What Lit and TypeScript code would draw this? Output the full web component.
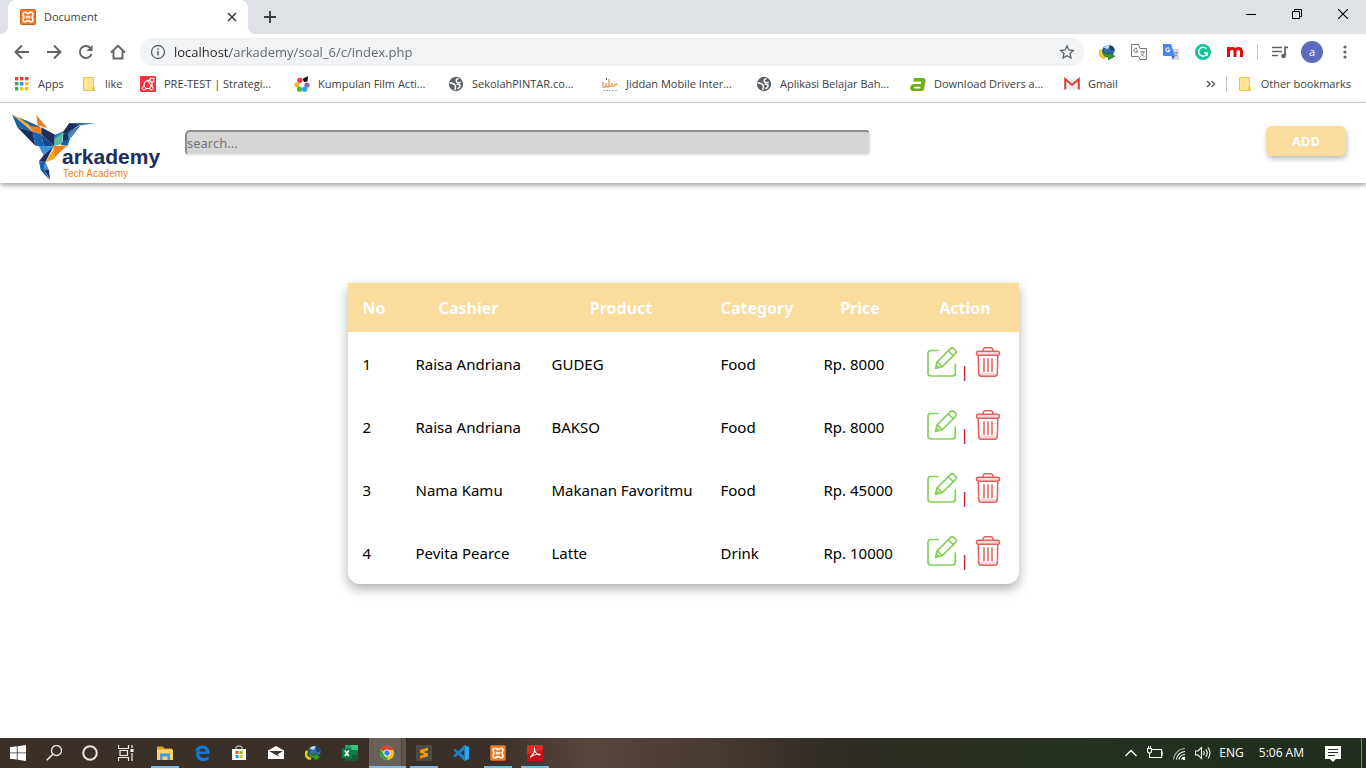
import { LitElement, html, svg, css, TemplateResult } from "lit";
import { customElement, state } from "lit/decorators.js";
import { classMap } from "lit/directives/class-map.js";

const icon = (size: number, body: TemplateResult, box = "0 0 16 16") =>
  html`<svg class="ico" width=${size} height=${size} viewBox=${box} aria-hidden="true">${body}</svg>`;

/* ---------- shared glyphs ---------- */
const xampp = svg`<rect x=".5" y=".5" width="15" height="15" rx="1" fill="#f47b20" stroke="#c9601a"/>
  <path d="M5.600 3.200C3.800 3 2.800 4.200 3.100 5.600c.2 1 .8 1.400.8 2.400s-.6 1.400-.8 2.400c-.3 1.400.7 2.600 2.500 2.400 1.200-.2 1.200-1.300 2.400-1.300s1.200 1.100 2.400 1.300c1.800.2 2.800-1 2.500-2.400-.2-1-.8-1.400-.8-2.400s.6-1.400.8-2.400c.3-1.400-.7-2.600-2.500-2.400C9.200 3.400 9.200 4.500 8 4.500S6.800 3.400 5.600 3.200z" fill="none" stroke="#fff" stroke-width="1.600"/>
  <path d="M6 6.800q2 2.400 4 0M6 9.400q2-2.400 4 0" fill="none" stroke="#fff" stroke-width="1.300"/>`;
const folder = svg`<path d="M2.500 1.500h10v10.500h1v2.500h-11z" fill="#ffe592" stroke="#e8c44c"/><path d="M11.500 14v-2.500q1-1.500 2 0V14z" fill="#ffe592" stroke="#e8c44c"/>`;
const globe = svg`<circle cx="8" cy="8" r="7.200" fill="#5f6368"/><path d="M1.500 6.800q3 .2 4.800 1.600 2.200 1.600.4 5.600" fill="none" stroke="#fff" stroke-width="1.500"/><path d="M12.800 6.500q-4.600.6-4.600-1.700 0-1.600 2.300-2.200M8.500 8.200q4.600-.4 3.300 2.500-.7 1.600-2.500 1.800" fill="none" stroke="#fff" stroke-width="1.500"/>`;
const idm = svg`<ellipse cx="9.500" cy="6.500" rx="6.200" ry="5.500" fill="#2f6db5"/><path d="M4.500 3.500q3-3.500 7-2L8.500 5z" fill="#b5e0f4"/><path d="M10 1.200q4.800.2 5.700 5L12 7z" fill="#22415f"/><path d="M2.500 6C-.5 8.500 1 13.500 6 13.500" fill="none" stroke="#e8c91f" stroke-width="2.600"/><path d="M5 4.500c-1.500 3 1 5.800 4.500 5.800V8l6.300 4.200-6.300 3.500v-2.400C4.500 13.300 1.500 8.500 5 4.500z" fill="#3c9b2d" stroke="#1f4f18" stroke-width=".7"/>`;

/* ---------- bookmarks ---------- */
const apps = svg`${[0, 1, 2].map((r) => [0, 1, 2].map((c) => svg`<rect x=${1 + c * 5} y=${1 + r * 5} width="3.400" height="3.400"
  fill=${["#ea4335", "#ea4335", "#ea4335", "#34a853", "#4285f4", "#fbbc05", "#34a853", "#fbbc05", "#fbbc05"][r * 3 + c]}/>`))}`;
const preTest = svg`<rect width="16" height="16" rx="1" fill="#f5313f"/><path d="M4 11V8.500Q4.500 4.500 10 4M5.500 12.500h5M12 6v5M8 4.500l3.500 6.500" fill="none" stroke="#fff" stroke-width="1.200"/><circle cx="4" cy="12.300" r="1.700" fill="#f5313f" stroke="#fff"/><circle cx="11.500" cy="12.300" r="1.700" fill="#f5313f" stroke="#fff"/><rect x="10.300" y="2.300" width="3.500" height="3.500" fill="#f5313f" stroke="#fff"/>`;
const petals = svg`<circle cx="5.800" cy="4.300" r="2.600" fill="#ef3340"/><path d="M8.500 3L14 0l-.5 5.500L10 6z" fill="#111"/><circle cx="3" cy="8.800" r="2.600" fill="#f7b52c"/><circle cx="13" cy="9" r="2.600" fill="#8d5fb0"/><circle cx="5.500" cy="13.200" r="2.600" fill="#4db748"/><circle cx="10.700" cy="13.200" r="2.600" fill="#22a7e0"/><circle cx="8" cy="8.800" r="2" fill="#fff"/>`;
const jiddan = svg`<path d="M1 6v5q2 1 3-1V7m0 3q2 2 3 0V3M7 10q2 1 3-1V7m0 3q2 1 3-1V8m0 1q2 0 2-1.500" fill="none" stroke="#e08a3c" stroke-width="1.200"/><path d="M4.500 2v2" stroke="#444"/><path d="M1 14.500h14" stroke="#8fc3a0" stroke-dasharray="2 1"/>`;
const drivers = svg`<path d="M4 2h8.500q3.500 0 3 3L14 13.200q-.3 1.800-2 1.800H3Q-.4 15 .2 11.600.8 8 4.500 8h6.400l.5-2.600H3.200zM5 10.800q-1 0-1.100.9-.1.800.8.800h5.400l.3-1.700z" fill="#6fae1c" fill-rule="evenodd"/>`;
const gmail = svg`<path d="M1.500 2.500h13v11h-13z" fill="#ececec"/><path d="M1.200 13.500V3.200L8 9l6.800-5.800v10.300" fill="none" stroke="#d93f33" stroke-width="2"/>`;

const bookmarks = [
  { label: "Apps", glyph: apps, kind: "apps" },
  { label: "like", glyph: folder, kind: "like" },
  { label: "PRE-TEST | Strategi...", glyph: preTest, kind: "full" },
  { label: "Kumpulan Film Acti...", glyph: petals, kind: "full" },
  { label: "SekolahPINTAR.co...", glyph: globe, kind: "full" },
  { label: "Jiddan Mobile Inter...", glyph: jiddan, kind: "full" },
  { label: "Aplikasi Belajar Bah...", glyph: globe, kind: "full" },
  { label: "Download Drivers a...", glyph: drivers, kind: "full" },
  { label: "Gmail", glyph: gmail, kind: "last" },
];

/* ---------- toolbar ---------- */
const nav = [
  { name: "Back", glyph: svg`<path d="M15 8H2M8 1.500L1.500 8 8 14.500"/>` },
  { name: "Forward", glyph: svg`<path d="M1 8h13M8 1.500L14.500 8 8 14.500"/>` },
  { name: "Reload", glyph: svg`<path d="M13.500 10a6 6 0 1 1-1.300-6.200"/><path d="M14.500 1v6h-6z" fill="#5f6368" stroke="none"/>` },
  { name: "Home", glyph: svg`<path d="M1 8.500L8 1.800l7 6.700M3.500 7v7.500h9V7"/>` },
];

const extensions = [
  { name: "Download manager", glyph: idm },
  { name: "Page translator", glyph: svg`<path d="M.5.500h7l1.500 4h6.500v11H9l-1.500-3h-7z" fill="#fff" stroke="#777"/><path d="M6.500 5.200a2 2 0 1 0 .3 1.600H5" fill="none" stroke="#777"/><path d="M9 8h5M11.500 7v1M13 8c-.5 2-2 3.500-3.500 4.500M10 9.500c1 1.500 2 2.500 3.500 3" fill="none" stroke="#777" stroke-width=".9"/>` },
  { name: "Translate", glyph: svg`<path d="M6 5h10v11H9z" fill="#d6d9dd"/><path d="M0 0h8l4 12H1.500Q0 12 0 10.500z" fill="#4285f4"/><path d="M9 12h3l-2.500 3.500z" fill="#2b57b0"/><path d="M6.500 4.500a2 2 0 1 0 .4 1.700H5" fill="none" stroke="#fff" stroke-width="1.100"/><path d="M11 8.500h4M14 8.500c-.4 1.500-1.200 2.500-2.200 3.500M12 10l2.500 2.500" fill="none" stroke="#7c8894" stroke-width=".9"/>` },
  { name: "Grammar", glyph: svg`<circle cx="8" cy="8" r="8" fill="#15c39a"/><path d="M11.500 5a4.400 4.400 0 1 0 .8 4H9M12.300 9v3" fill="none" stroke="#fff" stroke-width="1.500"/>` },
  { name: "Mendeley", glyph: svg`<path d="M1.500 13V3M2 7q.5-2.600 3.200-2.600Q8 4.400 8 7v6M8.200 7q.6-2.600 3.300-2.600 3 0 3 2.800V13" fill="none" stroke="#e60b0b" stroke-width="3"/>` },
];

/* ---------- taskbar ---------- */
const tasks = [
  { name: "Start", kind: "sys", glyph: svg`<path d="M0 2.200l6.800-.9v6.200H0zM7.600 1.200L16 0v7.500H7.600zM0 8.300h6.800v6.300L0 13.700zM7.600 8.300H16V16l-8.400-1.200z" fill="#fff"/>` },
  { name: "Search", kind: "sys", glyph: svg`<circle cx="10.500" cy="5.500" r="5" fill="none" stroke="#eee" stroke-width="1.300"/><path d="M6.800 9.200L.8 15.300" stroke="#eee" stroke-width="1.500"/>` },
  { name: "Cortana", kind: "sys", glyph: svg`<circle cx="8" cy="8" r="6.800" fill="none" stroke="#e9e7e5" stroke-width="2"/>` },
  { name: "Task view", kind: "sys", glyph: svg`<path d="M.5 0v3.500h10V0M2 5.500h7.500v5H2zM.5 16v-3.500h10V16M14 0v3M14 8v8" fill="none" stroke="#eee" stroke-width="1.200"/><rect x="12.500" y="4" width="3" height="3" fill="#fff"/>` },
  { name: "File Explorer", kind: "open", glyph: svg`<path d="M0 1.500h6l1.500 2H15V7H0z" fill="#e79e1c"/><path d="M0 4.500h16V15H0z" fill="#fcd46b"/><path d="M3 15V8.500h10V15h-2.500v-3.500h-5V15z" fill="#3f9be3"/>` },
  { name: "Edge", kind: "app", glyph: svg`<path d="M.7 7.600C1.300 3 4.300.4 8.400.4c4.700 0 7.100 3.300 7.100 7.100v1.600H5.200c.2 3.200 3.300 3.900 5.300 3.800 1.600-.1 2.900-.5 4.100-1.200v3c-1.600.9-3.400 1.300-5.400 1.300-4 0-7-2.300-7-6.300 0-2.400 1.300-4.500 3.400-5.700C3.700 4.700 1.700 6 .7 7.600zM5.300 6.500h6.300c0-2-1.200-3-3-3s-3 1.200-3.300 3z" fill="#0c7bdc"/>` },
  { name: "Store", kind: "app", glyph: svg`<path d="M5 4V2.500q0-1.500 3-1.500t3 1.500V4" fill="none" stroke="#eee"/><path d="M1 4h14v11H1z" fill="#fff"/><path d="M4.500 6h3v3h-3z" fill="#f25022"/><path d="M8.500 6h3v3h-3z" fill="#7fba00"/><path d="M4.500 10h3v3h-3z" fill="#00a4ef"/><path d="M8.500 10h3v3h-3z" fill="#ffb900"/>` },
  { name: "Mail", kind: "app", glyph: svg`<path d="M0 5.500L8 1l8 4.500V14H0z" fill="#fff"/><path d="M1 6h14l-5.500 3.500 2 2.500z" fill="#40362c"/>` },
  { name: "Download manager", kind: "app", glyph: idm },
  { name: "Excel", kind: "app", glyph: svg`<path d="M3 0h6v16H3z" fill="#21a366"/><path d="M9 0h7v5H9z" fill="#33c481"/><path d="M9 5h7v6H9z" fill="#107c41"/><path d="M3 10h13v6H3z" fill="#185c37"/><path d="M0 3.500h9.500v9.500H0z" fill="#107c41"/><path d="M2.800 5.500l4 5.500M6.800 5.500l-4 5.500" stroke="#fff" stroke-width="1.500"/>` },
  { name: "Chrome", kind: "active", glyph: svg`<circle cx="8" cy="8" r="7.200" fill="#fbc116"/><path d="M8 8L1.800 4.400A7.200 7.200 0 0 1 14.500 5H8z" fill="#e33b2e"/><path d="M1.800 4.400L5.500 10 8 15.200A7.200 7.200 0 0 1 1.800 4.400z" fill="#31a350"/><path d="M8 15.200a7.200 7.200 0 0 1-2 0L9.500 9z" fill="#31a350"/><circle cx="8" cy="8" r="3.500" fill="#fff"/><circle cx="8" cy="8" r="2.700" fill="#4285f4"/>` },
  { name: "Sublime Text", kind: "open", glyph: svg`<rect width="16" height="16" rx="1" fill="#4b4b4b"/><path d="M4 5l8-2.500v3L7.500 7 12 8.400v2.800L4 13.700v-3L8.500 9.200 4 7.800z" fill="#ff9800"/>` },
  { name: "Visual Studio Code", kind: "open-none", glyph: svg`<path d="M11.500 0L16 2v12l-4.500 2z" fill="#2aa7f0"/><path d="M11.500 0v5L2 12.300.2 11z" fill="#1b80c4"/><path d="M11.500 16v-5L2 3.700.2 5z" fill="#1583cf"/>` },
  { name: "XAMPP", kind: "open", glyph: xampp },
  { name: "Acrobat Reader", kind: "open", glyph: svg`<rect width="16" height="16" rx="1" fill="#c90f0f"/><path d="M0 0h16v5L0 9z" fill="#dd2b25"/><path d="M7.500 3.500c-1 2 2.500 6.500 5.500 6.500 1-1.200-4.500-1.500-9.500 2C3 11.500 8.500 9 7.500 3.500z" fill="none" stroke="#fff" stroke-width="1.100"/>` },
];

interface Order { cashier: string; product: string; category: string; price: number; }

/* Faceted hummingbird mark with the word mark beside it. */
const logo = html`<svg class="logo-art" width="152" height="72" viewBox="0 0 152 72" role="img" aria-label="arkademy Tech Academy">
  <g transform="translate(-8 -10) scale(.3333)">
    <path d="M36 43L98 95 52 82z" fill="#1762a9"/><path d="M36 43L76 64 98 95z" fill="#f5a81c"/>
    <path d="M76 60L122 82 124 103 98 95z" fill="#ef7e22"/><path d="M56 52L122 82 92 78z" fill="#1762a9"/>
    <path d="M109 45L142 84 113 76z" fill="#ef7e22"/><path d="M52 82L98 95 106 137z" fill="#1b2c5d"/>
    <path d="M98 95L124 103 131 139 106 137z" fill="#1762a9"/><path d="M124 82L165 104 162 138 124 103z" fill="#1b2c5d"/>
    <path d="M124 103L162 138 131 139z" fill="#14488a"/><path d="M165 104L190 94 185 103 162 138z" fill="#2d80c4"/>
    <path d="M190 98L185 132 162 138 166 115z" fill="#55bf9f"/><path d="M208 69L242 73 203 99 187 99z" fill="#1b2c5d"/>
    <path d="M208 69L287 70 240 76z" fill="#2467a8"/><path d="M242 76L203 124 188 128 190 100 204 99z" fill="#1b2c5d"/>
    <path d="M238 80L205 122 204 101z" fill="#3b8fd4"/><path d="M188 124L210 116 203 137 182 134z" fill="#1762a9"/>
    <path d="M160 138L203 136 174 162 158 180z" fill="#ef7e22"/><path d="M164 142L164 176 136 187z" fill="#f5a81c"/>
    <path d="M116 138L162 139 131 166z" fill="#3b8fd4"/><path d="M131 166L160 140 136 186 117 184z" fill="#1b2c5d"/>
    <path d="M117 184L136 186 132 208 148 239 122 210z" fill="#1762a9"/><path d="M136 186L147 210 132 208z" fill="#3b8fd4"/>
    <path d="M132 208L147 210 150 239z" fill="#1b2c5d"/>
  </g>
  <text x="54" y="54" class="word">arkademy</text><text x="55" y="67" class="sub">Tech Academy</text>
</svg>`;

const editIcon = html`<svg class="act" width="30" height="30" viewBox="0 0 30 30" aria-hidden="true"><g fill="none" stroke="#86cf5a" stroke-width="1.700" stroke-linejoin="round" stroke-linecap="round"><path d="M11 3.500H4Q1 3.500 1 6.500V26q0 3 3 3H25.500q2.800 0 2.800-3V17"/><path d="M8.500 21.500l1.500-6.500L23.500 1.600q1.500-1.400 3.200-.2l1.600 1.600q1.700 1.700.2 3.300L15.500 19.500z"/><path d="M21.500 4l4.700 4.700M10.500 15.200l4.300 4.200M9.500 18l2.500 2.500"/></g></svg>`;
const trashIcon = html`<svg class="act" width="30" height="30" viewBox="0 0 30 30" aria-hidden="true"><path d="M4 5h22v3.500H4zM6 26h18v3H6z" fill="#f9d9d7"/><g fill="none" stroke="#e2615c" stroke-width="1.500" stroke-linejoin="round"><rect x="3.500" y="4.300" width="23" height="4" rx="2"/><path d="M10 4q0-3.200 2.500-3.200h5Q20 .8 20 4M5.200 8.500l.5 18.200q.2 2.500 2.700 2.500h13.200q2.500 0 2.700-2.500l.5-18.200"/></g><path d="M11 12v12.500M15 12v12.500M19 12v12.500" stroke="#eb8985" stroke-width="2" stroke-linecap="round"/></svg>`;

@customElement("browser-chrome")
class BrowserChrome extends LitElement {
  static styles = css`
    :host { display: block; font: 11px/16px "Open Sans", "Noto Sans", sans-serif; color: #3c4043; background: #fff; border-bottom: 1px solid #d5d6d8; }
    button { border: 0; padding: 0; margin: 0; background: none; font: inherit; color: inherit; display: flex; align-items: center; justify-content: center; }
    a { color: inherit; text-decoration: none; }
    .ico { display: block; flex: none; }
    .strip { display: flex; height: 34px; background: #dee1e6; padding-left: 8px; }
    .tab { position: relative; display: flex; align-items: center; gap: 8px; width: 240px; box-sizing: border-box; padding: 0 8px 0 12px; background: #fff; border-radius: 8px 8px 0 0; }
    .tab::before, .tab::after { content: ""; position: absolute; bottom: 0; width: 8px; height: 8px; }
    .tab::before { left: -8px; background: radial-gradient(circle at 0 0, transparent 8px, #fff 8px); }
    .tab::after { right: -8px; background: radial-gradient(circle at 100% 0, transparent 8px, #fff 8px); }
    .title { flex: 1; }
    .plus { width: 44px; }
    .window { display: flex; margin-left: auto; height: 28px; }
    .window button { width: 46px; }
    .bar { display: flex; align-items: center; height: 36px; padding-left: 6px; }
    .nav { width: 32px; height: 32px; fill: none; stroke: #5f6368; stroke-width: 1.900; }
    .omni { display: flex; align-items: center; flex: 1; gap: 8px; height: 28px; margin: 0 7px 0 6px; padding: 0 9px 0 10px; border-radius: 14px; background: #f1f3f4; }
    .url { flex: 1; min-width: 0; border: 0; padding: 0; outline: 0; font: 13px/20px "Open Sans", "Noto Sans", sans-serif; color: transparent; background: linear-gradient(90deg, #202124 56px, #5f6368 56px); -webkit-background-clip: text; background-clip: text; }
    .ext { width: 32px; height: 28px; }
    .rule { width: 1px; height: 16px; background: #c8cacd; flex: none; }
    .bar .rule { margin-left: 6px; }
    .media { width: 43px; }
    .avatar { width: 22px; height: 22px; border-radius: 50%; background: #5c6bc0; color: #fff; }
    .more { width: 43px; }
    .marks { display: flex; align-items: center; height: 32px; padding: 0 15px 4px 14px; box-sizing: border-box; }
    .mark { display: flex; align-items: center; gap: 8px; white-space: nowrap; }
    .mark.apps { width: 67px; }
    .mark.like { width: 59px; }
    .mark.full { width: 154px; }
    .tail { display: flex; align-items: center; gap: 10px; margin-left: auto; }
  `;

  render() {
    return html`
      <div class="strip">
        <div class="tab">
          ${icon(16, xampp)}<span class="title">Document</span>
          <button aria-label="Close tab">${icon(16, svg`<path d="M4 4l8 8M12 4l-8 8" stroke="#3c4043" stroke-width="1.600"/>`)}</button>
        </div>
        <button class="plus" aria-label="New tab">${icon(16, svg`<path d="M8 2v12M2 8h12" stroke="#3c4043" stroke-width="1.900"/>`)}</button>
        <div class="window">
          <button aria-label="Minimize">${icon(10, svg`<path d="M0 5.500h10" stroke="#000"/>`, "0 0 10 10")}</button>
          <button aria-label="Restore">${icon(10, svg`<path d="M.5 2.500h7v7h-7zM2.500 2.500v-2h7v7h-2" fill="none" stroke="#000"/>`, "0 0 10 10")}</button>
          <button aria-label="Close">${icon(10, svg`<path d="M0 0l10 10M10 0L0 10" stroke="#000" stroke-width="1.100"/>`, "0 0 10 10")}</button>
        </div>
      </div>
      <div class="bar">
        ${nav.map((n) => html`<button class="nav" aria-label=${n.name}>${icon(16, n.glyph)}</button>`)}
        <div class="omni">
          ${icon(16, svg`<circle cx="8" cy="8" r="6.500" fill="none" stroke="#5f6368" stroke-width="1.300"/><path d="M8 7v4.500M8 4.300v1.500" stroke="#5f6368" stroke-width="1.500"/>`)}
          <input class="url" aria-label="Address" .value=${"localhost/arkademy/soal_6/c/index.php"} />
          <button aria-label="Bookmark this page">${icon(16, svg`<path d="M8 1.800l1.900 4.200 4.500.5-3.400 3 1 4.500-4-2.300L4 14l1-4.500-3.400-3L6.100 6z" fill="none" stroke="#5f6368" stroke-width="1.300"/>`)}</button>
        </div>
        ${extensions.map((e) => html`<button class="ext" aria-label=${e.name}>${icon(16, e.glyph)}</button>`)}
        <span class="rule"></span>
        <button class="media" aria-label="Media">${icon(16, svg`<path d="M0 3.500h10M0 7.500h10M0 11.500h6" stroke="#5f6368" stroke-width="1.600"/><path d="M16 3.300h-3V12" fill="none" stroke="#5f6368" stroke-width="1.700"/><circle cx="11.500" cy="12" r="2.300" fill="#5f6368"/>`)}</button>
        <button class="avatar" aria-label="Profile a">a</button>
        <button class="more" aria-label="Menu">${icon(16, svg`<g fill="#5f6368"><circle cx="8" cy="3" r="1.600"/><circle cx="8" cy="8" r="1.600"/><circle cx="8" cy="13" r="1.600"/></g>`)}</button>
      </div>
      <nav class="marks" aria-label="Bookmarks">
        ${bookmarks.map((b) => html`<a href="#" class="mark ${b.kind}">${icon(16, b.glyph)}${b.label}</a>`)}
        <div class="tail">
          <button aria-label="More bookmarks">${icon(10, svg`<path d="M1 2l3 3-3 3M5.500 2l3 3-3 3" fill="none" stroke="#5f6368" stroke-width="1.500"/>`, "0 0 10 10")}</button>
          <span class="rule"></span>
          <a href="#" class="mark">${icon(16, folder)}Other bookmarks</a>
        </div>
      </nav>`;
  }
}

@customElement("order-page")
class OrderPage extends LitElement {
  static styles = css`
    :host { display: block; background: #fff; color: #000; font: 15px/18px "Noto Sans", "Open Sans", sans-serif; }
    a { text-decoration: none; color: #8b0000; }
    .top { display: flex; align-items: center; height: 80px; padding: 0 20px 0 8px; box-shadow: 0 2px 5px rgba(0, 0, 0, 0.4); }
    .logo { display: block; margin: 6px 25px 0 0; }
    .logo-art { display: block; }
    .word { font: bold 21px "Liberation Sans", Arial, sans-serif; fill: #1b2c5d; }
    .sub { font: 10px "Liberation Sans", Arial, sans-serif; fill: #ee7f24; }
    .search { width: 51%; height: 22px; padding: 0; border: 2px solid; border-color: #8e8e8e #ececec #ececec #8e8e8e; border-radius: 5px; background: #d5d5d5; font: 13px/20px "Noto Sans", sans-serif; color: #000; outline: 0; box-sizing: content-box; }
    .search::placeholder { color: #757575; opacity: 1; }
    .add { margin: -4px 0 0 auto; width: 80px; height: 30px; padding: 0; border: 0; border-radius: 6px; background: #fadc9c; color: #fff; font: bold 13px/18px "Noto Sans", sans-serif; box-shadow: 1px 3px 5px rgba(0, 0, 0, 0.25); }
    .orders { margin: 100px auto 0; border-spacing: 0; border-radius: 0 0 12px 12px; table-layout: fixed; width: 671px; box-shadow: 0 5px 12px rgba(0, 0, 0, 0.32); }
    .c-no { width: 53px; }
    .c-cashier { width: 136px; }
    .c-product { width: 169px; }
    .c-category { width: 103px; }
    .c-price { width: 103px; }
    th { padding: 16px 0 14px; background: #fadc9c; color: #fff; font-size: 16px; line-height: 19px; }
    td { padding: 15px 0 15px 15px; text-align: left; white-space: nowrap; }
    .act { vertical-align: baseline; }
    .actions { color: #8b0000; }
  `;

  @state() private orders: Order[] = [
    { cashier: "Raisa Andriana", product: "GUDEG", category: "Food", price: 8000 },
    { cashier: "Raisa Andriana", product: "BAKSO", category: "Food", price: 8000 },
    { cashier: "Nama Kamu", product: "Makanan Favoritmu", category: "Food", price: 45000 },
    { cashier: "Pevita Pearce", product: "Latte", category: "Drink", price: 10000 },
  ];

  render() {
    return html`
      <header class="top">
        <a class="logo" href="#">${logo}</a>
        <input class="search" type="text" aria-label="search" placeholder="search..." />
        <button class="add">ADD</button>
      </header>
      <main>
        <table class="orders">
          <colgroup><col class="c-no" /><col class="c-cashier" /><col class="c-product" /><col class="c-category" /><col class="c-price" /><col /></colgroup>
          <thead><tr>${["No", "Cashier", "Product", "Category", "Price", "Action"].map((h) => html`<th scope="col">${h}</th>`)}</tr></thead>
          <tbody>
            ${this.orders.map((o, i) => html`<tr>
              <td>${i + 1}</td><td>${o.cashier}</td><td>${o.product}</td><td>${o.category}</td><td>Rp. ${o.price}</td>
              <td class="actions"><a href="#" aria-label="Edit">${editIcon}</a> | <a href="#" aria-label="Delete">${trashIcon}</a></td>
            </tr>`)}
          </tbody>
        </table>
      </main>`;
  }
}

@customElement("task-bar")
class TaskBar extends LitElement {
  static styles = css`
    :host { display: flex; align-items: stretch; height: 30px; color: #fff; font: 12px/16px "Open Sans", "Noto Sans", sans-serif; background: linear-gradient(90deg, #3a3027 0%, #3b3028 36%, #56473f 43%, #483b34 52%, #2e2b22 62%, #24301f 78%, #222e1d 100%); }
    button { border: 0; padding: 0; margin: 0; background: none; color: inherit; font: inherit; display: flex; align-items: center; justify-content: center; box-sizing: border-box; }
    .ico { display: block; flex: none; }
    .task { width: 37px; padding: 0 5px 0 4px; }
    .sys { width: 36px; }
    .sys + .open { margin-left: 3px; }
    .open { background: linear-gradient(#76b9ed, #76b9ed) 4px 100% / 28px 2px no-repeat; }
    .active { background: linear-gradient(#76b9ed, #76b9ed) 0 100% / 100% 2px no-repeat, linear-gradient(90deg, #69605a 32px, #4b423c 32px, #4b423c 33px, #5d544e 33px); }
    .tray { display: flex; align-items: center; margin-left: auto; gap: 8px; padding-right: 4px; }
    .lang { margin-right: 7px; }
    .note { margin: 2px 12px 0 13px; }
    .edge { width: 1px; align-self: stretch; background: #7b8276; }
  `;

  render() {
    return html`
      ${tasks.map((t) => html`<button class=${classMap({ task: true, [t.kind]: true })} aria-label=${t.name}>${icon(16, t.glyph)}</button>`)}
      <div class="tray">
        <button aria-label="Hidden icons">${icon(16, svg`<path d="M2.500 11L8 5.500l5.500 5.500" fill="none" stroke="#fff" stroke-width="1.300"/>`)}</button>
        <button aria-label="Battery">${icon(16, svg`<path d="M5 4.500h9.500v8H5M14.500 7H16v3h-1.500M2.500 8v4.500H6M.5 3.500h4V6q0 2-2 2T.5 6zM1.500 1v2M3.500 1v2" fill="none" stroke="#fff" stroke-width="1.100"/>`)}</button>
        <button aria-label="Network">${icon(16, svg`<g fill="none" stroke-width="1.200"><path d="M2.500 14.500A12 12 0 0 1 14 3.500" stroke="#aaa"/><path d="M5.500 14.500A9 9 0 0 1 14 6.500M8 14.500a6 6 0 0 1 6-5M10.500 14.500a3.500 3.500 0 0 1 3.500-2.300" stroke="#fff"/></g><circle cx="13" cy="14" r="1.200" fill="#fff"/>`)}</button>
        <button aria-label="Volume">${icon(16, svg`<path d="M.5 6h2.500L6.500 2.500v11L3 10H.5zM8.500 6q1.500 2 0 4M10.800 4.300q2.800 3.700 0 7.400M13 2.500q4 5.500 0 11" fill="none" stroke="#fff" stroke-width="1.100"/>`)}</button>
        <button class="lang">ENG</button>
        <button><time>5:06 AM</time></button>
        <button class="note" aria-label="Notifications">${icon(16, svg`<path d="M0 0h16v13h-5l-3 3-3-3H0z" fill="#fff"/><path d="M3 3.500h10M3 6.500h10M3 9.500h7" stroke="#24301f"/>`)}</button>
        <span class="edge"></span>
      </div>`;
  }
}

@customElement("app-root")
class AppRoot extends LitElement {
  static styles = css`
    :host { display: flex; flex-direction: column; min-height: 100vh; background: #fff; }
    .page { flex: 1; }
  `;

  render() {
    return html`<browser-chrome></browser-chrome><order-page class="page"></order-page><task-bar></task-bar>`;
  }
}
